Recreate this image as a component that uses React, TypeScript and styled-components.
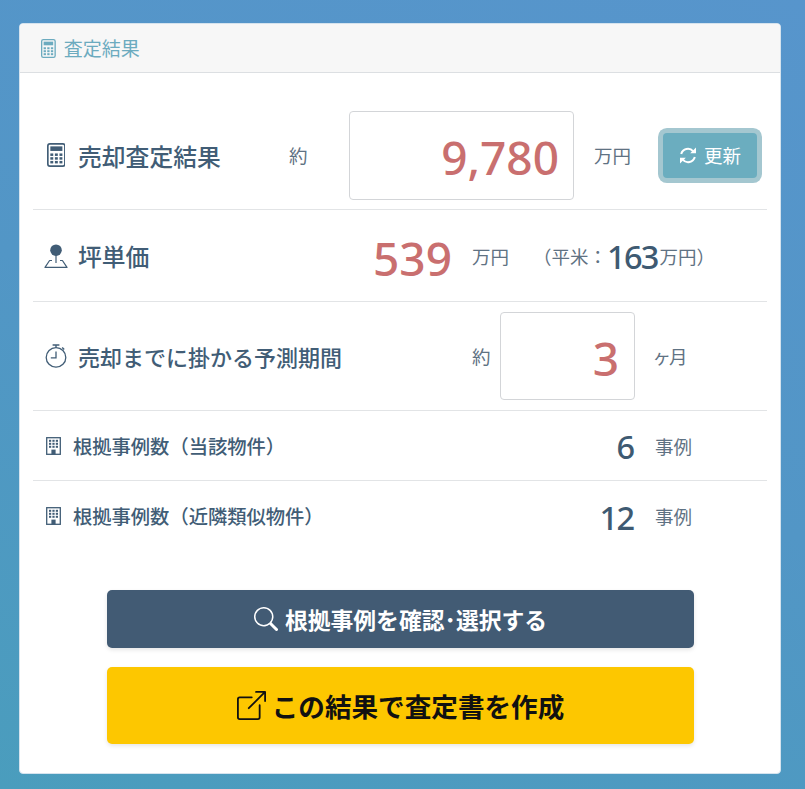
import styled, { createGlobalStyle } from 'styled-components'
import { BsSearch, BsBoxArrowUpRight } from 'react-icons/bs'

const GlobalStyle = createGlobalStyle`
  html, body {
    margin: 0;
    padding: 0;
  }
  body {
    font-family: "Noto Sans", "Noto Sans CJK JP", sans-serif;
    color: #3e5a72;
  }
  * {
    box-sizing: border-box;
  }
`

function CalculatorIcon({ size }: { size: number }) {
  return (
    <svg width={size * 0.78} height={size} viewBox="0 0 18 23" fill="none">
      <rect x="0.8" y="0.8" width="16.4" height="21.4" rx="2" stroke="currentColor" strokeWidth="1.6" />
      <rect x="3.2" y="3.2" width="11.6" height="4.4" fill="currentColor" />
      {[10, 13.6, 17.2].flatMap((y) =>
        [3.2, 7.6, 12].map((x) => <rect key={`${x}-${y}`} x={x} y={y} width="2.8" height="2.4" fill="currentColor" />)
      )}
    </svg>
  )
}

function PinIcon() {
  return (
    <svg width="24" height="24" viewBox="0 0 24 24" fill="none">
      <circle cx="12" cy="6.2" r="5.8" fill="currentColor" />
      <path d="M12 11v8" stroke="currentColor" strokeWidth="1.2" />
      <path d="M8 16.5H5.6L1 23.4h22l-4.6-6.9H16" stroke="currentColor" strokeWidth="1.2" strokeLinejoin="round" />
    </svg>
  )
}

function StopwatchIcon() {
  return (
    <svg width="22" height="24" viewBox="0 0 22 24" fill="none">
      <circle cx="11" cy="13.4" r="9.8" stroke="currentColor" strokeWidth="1.3" />
      <path d="M11 7.5v6.4H5.8" stroke="currentColor" strokeWidth="1.3" />
      <path d="M7.6 1h6.8M11 1v2.6M17.2 3.6l2 2" stroke="currentColor" strokeWidth="1.4" />
    </svg>
  )
}

function BuildingIcon() {
  return (
    <svg width="15" height="18" viewBox="0 0 15 18" fill="none">
      <rect x="0.7" y="0.7" width="13.6" height="16.6" stroke="currentColor" strokeWidth="1.3" />
      {[2.8, 5.8, 8.8].flatMap((y) =>
        [3, 6.4, 9.8].map((x) => <rect key={`${x}-${y}`} x={x} y={y} width="2.2" height="2" fill="currentColor" />)
      )}
      <rect x="5.4" y="12.6" width="4.2" height="5" fill="currentColor" />
    </svg>
  )
}

function RefreshIcon() {
  return (
    <svg width="18" height="17" viewBox="0 0 18 17" fill="none">
      <path d="M2.2 7A6.9 6.9 0 0 1 14.2 4.4" stroke="currentColor" strokeWidth="2" />
      <path d="M11.2 6.2h5.8V.6z" fill="currentColor" />
      <path d="M15.8 10A6.9 6.9 0 0 1 3.8 12.6" stroke="currentColor" strokeWidth="2" />
      <path d="M6.8 10.8H1v5.6z" fill="currentColor" />
    </svg>
  )
}

export default function App() {
  return (
    <>
      <GlobalStyle />
      <Page>
        <Card>
          <CardHeader>
            <CalculatorIcon size={19} />
            査定結果
          </CardHeader>
          <CardBody>
            <ResultRow $columns="256px 60px 225px 20px 69px 94px" $height={109}>
              <RowTitle>
                <IconSlot>
                  <CalculatorIcon size={24} />
                </IconSlot>
                売却査定結果
              </RowTitle>
              <Unit>約</Unit>
              <ValueBox>9,780</ValueBox>
              <span />
              <Unit>万円</Unit>
              <RefreshButton>
                <RefreshIcon />
                更新
              </RefreshButton>
            </ResultRow>

            <ResultRow $columns="419px 20px 57px auto" $height={92}>
              <RowTitle>
                <IconSlot>
                  <PinIcon />
                </IconSlot>
                坪単価
                <PlainValue>539</PlainValue>
              </RowTitle>
              <span />
              <Unit>万円</Unit>
              <SubPrice>
                <SubLabel>（平米：</SubLabel>
                <SubValue>163</SubValue>
                <Unit>万円）</Unit>
              </SubPrice>
            </ResultRow>

            <ResultRow $columns="439px 28px 135px 20px auto" $height={109}>
              <PeriodTitle>
                <IconSlot>
                  <StopwatchIcon />
                </IconSlot>
                売却までに掛かる予測期間
              </PeriodTitle>
              <Unit>約</Unit>
              <ValueBox $small>3</ValueBox>
              <span />
              <MonthUnit>ヶ月</MonthUnit>
            </ResultRow>

            <ResultRow $columns="602px 20px auto" $height={70}>
              <CountTitle>
                <CountIcon>
                  <BuildingIcon />
                </CountIcon>
                根拠事例数（当該物件）
                <CountValue>6</CountValue>
              </CountTitle>
              <span />
              <Unit>事例</Unit>
            </ResultRow>

            <ResultRow $columns="602px 20px auto" $height={70} $last>
              <CountTitle>
                <CountIcon>
                  <BuildingIcon />
                </CountIcon>
                根拠事例数（近隣類似物件）
                <CountValue>12</CountValue>
              </CountTitle>
              <span />
              <Unit>事例</Unit>
            </ResultRow>

            <Actions>
              <SearchButton>
                <BsSearch size={24} />
                根拠事例を確認･選択する
              </SearchButton>
              <CreateButton>
                <BsBoxArrowUpRight size={29} />
                この結果で査定書を作成
              </CreateButton>
            </Actions>
          </CardBody>
        </Card>
      </Page>
    </>
  )
}

const Page = styled.div`
  width: 805px;
  height: 789px;
  overflow: hidden;
  padding: 23px 24px 16px 19px;
  background: linear-gradient(200deg, #5795cc 0%, #5296c6 50%, #4a9dbd 100%);
`

const Card = styled.div`
  height: 751px;
  background: #fff;
  border: 1px solid #d5e3ee;
  border-radius: 4px;
  overflow: hidden;
`

const CardHeader = styled.div`
  height: 49px;
  display: flex;
  align-items: center;
  gap: 8px;
  padding: 0 0 0 21px;
  background: #f7f7f7;
  border-bottom: 1px solid #dcdfe2;
  font-size: 19px;
  color: #6cabbf;
`

const CardBody = styled.div`
  padding: 28px 13px 0;
`

const ResultRow = styled.div<{ $columns: string; $height: number; $last?: boolean }>`
  display: grid;
  grid-template-columns: ${(p) => p.$columns};
  align-items: center;
  height: ${(p) => p.$height}px;
  border-bottom: ${(p) => (p.$last ? 'none' : '1px solid #e2e4e6')};
`

const IconSlot = styled.span`
  flex: none;
  width: 24px;
  display: flex;
  justify-content: center;
  margin-right: 10px;
`

const CountIcon = styled.span`
  flex: none;
  display: flex;
  margin-right: 12px;
`

const RowTitle = styled.div`
  display: flex;
  align-items: center;
  padding-left: 11px;
  font-size: 23.8px;
  font-weight: 500;
  color: #415d76;
`

const PeriodTitle = styled(RowTitle)`
  font-size: 22px;
`

const CountTitle = styled(RowTitle)`
  padding-left: 13px;
  font-size: 19.3px;
`

const Unit = styled.span`
  font-size: 18.5px;
  white-space: nowrap;
  color: #5f7283;
`

const MonthUnit = styled(Unit)`
  margin-left: -1px;
  font-feature-settings: 'palt';
`

const ValueBox = styled.div<{ $small?: boolean }>`
  height: ${(p) => (p.$small ? 88 : 89)}px;
  display: flex;
  align-items: center;
  justify-content: flex-end;
  padding: 4px ${(p) => (p.$small ? 15 : 14)}px 0 0;
  border: 1px solid #d3d5d8;
  border-radius: 4px;
  font-size: 46px;
  font-weight: 500;
  color: #c96f6f;
`

const PlainValue = styled.span`
  margin-left: auto;
  padding-top: 4px;
  font-size: 46px;
  font-weight: 500;
  color: #c96f6f;
`

const SubPrice = styled.div`
  display: flex;
  align-items: center;
  margin-left: 4px;
`

const SubLabel = styled(Unit)`
  white-space: nowrap;
`

const SubValue = styled.span`
  padding: 2px 1.7px 0 0;
  font-size: 32.5px;
  font-weight: 500;
  letter-spacing: -1.7px;
  color: #3e5a72;
`

const CountValue = styled(SubValue)`
  margin-left: auto;
`

const RefreshButton = styled.button`
  height: 45px;
  width: 94px;
  display: flex;
  align-items: center;
  justify-content: center;
  gap: 7px;
  padding: 0;
  border: none;
  border-radius: 4px;
  background: #6badbf;
  box-shadow: 0 0 0 5px #a4c7d0;
  font-family: inherit;
  font-size: 18.5px;
  color: #fff;
`

const Actions = styled.div`
  display: flex;
  flex-direction: column;
  gap: 19px;
  padding: 39px 73px 0 74px;
`

const ActionButton = styled.button`
  width: 587px;
  flex: none;
  display: flex;
  align-items: center;
  justify-content: center;
  padding: 0;
  border: none;
  border-radius: 5px;
  box-shadow: 0 2px 4px rgba(0, 0, 0, 0.1);
  font-family: inherit;
  font-weight: 700;
`

const SearchButton = styled(ActionButton)`
  height: 58px;
  gap: 7px;
  background: #425b74;
  font-size: 22.8px;
  color: #fff;
`

const CreateButton = styled(ActionButton)`
  height: 77px;
  gap: 6px;
  background: #fdc700;
  font-size: 26.6px;
  color: #111;
`
